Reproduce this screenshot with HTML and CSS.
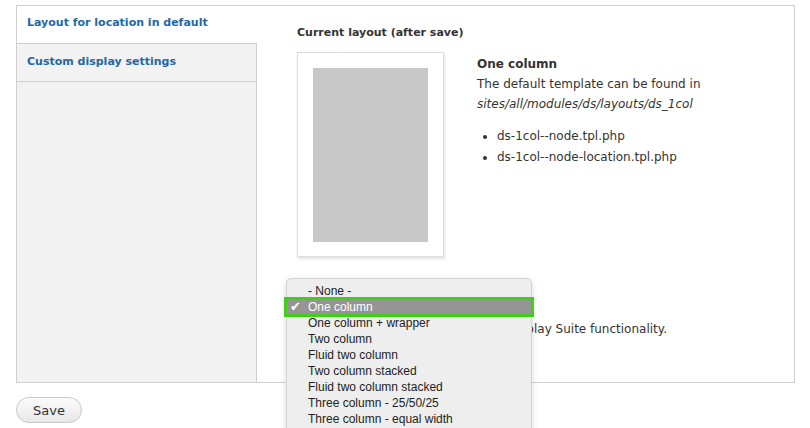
FILE: index.html
```html
<!DOCTYPE html>
<html>
<head>
<meta charset="utf-8">
<link rel="stylesheet" href="styles.css">
</head>
<body>
<div class="page">
  <div class="vtabs">
    <ul class="tablist">
      <li class="tab active"><a href="#">Layout for location in default</a></li>
      <li class="tab"><a href="#">Custom display settings</a></li>
    </ul>
    <div class="pane">
      <h3 class="title">Current layout (after save)</h3>
      <div class="layout-row">
        <div class="preview"><div class="preview-col"></div></div>
        <div class="info">
          <strong class="name">One column</strong>
          <div>The default template can be found in</div>
          <em>sites/all/modules/ds/layouts/ds_1col</em>
          <ul class="files">
            <li>ds-1col--node.tpl.php</li>
            <li>ds-1col--node-location.tpl.php</li>
          </ul>
        </div>
      </div>
      <div class="select-box">One column</div>
      <p class="desc">Select a layout. None will disable Display Suite functionality.</p>
    </div>
  </div>
  <button class="save">Save</button>
  <div class="menu">
    <div class="item">- None -</div>
    <div class="item selected"><span class="check">✔</span>One column</div>
    <div class="item">One column + wrapper</div>
    <div class="item">Two column</div>
    <div class="item">Fluid two column</div>
    <div class="item">Two column stacked</div>
    <div class="item">Fluid two column stacked</div>
    <div class="item">Three column - 25/50/25</div>
    <div class="item">Three column - equal width</div>
    <div class="item">Four column - equal width</div>
  </div>
</div>
</body>
</html>
```

FILE: styles.css
```css
html, body {
  margin: 0;
  padding: 0;
  background: #fff;
  overflow: hidden;
}
body {
  font-family: "DejaVu Sans", "Liberation Sans", sans-serif;
  font-size: 12px;
  color: #333;
}
.page {
  position: relative;
  padding: 5px 15px 0 16px;
  height: 423px;
}
.vtabs {
  display: flex;
  width: 777px;
  height: 376px;
  border: 1px solid #cfcfcf;
}
.tablist {
  list-style: none;
  margin: 0;
  padding: 0;
  width: 239px;
  flex: none;
  background: #f2f2f2;
  border-right: 1px solid #cfcfcf;
}
.tab {
  height: 35px;
  border-bottom: 1px solid #cfcfcf;
  display: flex;
  align-items: center;
  padding: 0 0 2px 10px;
}
.tab.active {
  background: #fff;
  margin-right: -1px;
  padding-bottom: 4px;
  height: 33px;
}
.tab a {
  color: #2367a7;
  font-weight: bold;
  text-decoration: none;
  font-size: 11px;
}
.pane {
  flex: 1;
  padding: 20px 0 0 40px;
}
.title {
  margin: 0;
  font-size: 11px;
  font-weight: bold;
  line-height: 13px;
}
.layout-row {
  display: flex;
  margin-top: 13px;
}
.preview {
  border: 1px solid #ddd;
  box-shadow: 1px 2px 3px rgba(0,0,0,0.12);
  padding: 15px 15px 14px 15px;
  box-sizing: border-box;
  width: 147px;
  height: 205px;
  flex: none;
}
.preview-col {
  width: 115px;
  height: 174px;
  background: #c8c8c8;
}
.info {
  margin-left: 33px;
  display: flex;
  flex-direction: column;
  line-height: 20px;
  padding-top: 2px;
}
.name { font-weight: bold; }
.files {
  margin: 12px 0 0 0;
  padding-left: 20px;
  line-height: 21px;
}
.select-box {
  margin-top: 30px;
  width: 230px;
  height: 20px;
}
.desc {
  margin: 14px 0 0 0;
  line-height: 16px;
  text-indent: 8px;
}
.save {
  margin-top: 14px;
  width: 66px;
  height: 26px;
  border: 1px solid #c8c8c8;
  border-radius: 13px;
  background: linear-gradient(#fbfbfb, #e8e8e8);
  font-family: "DejaVu Sans", sans-serif;
  font-size: 13px;
  color: #333;
  padding: 0;
}
.menu {
  position: absolute;
  left: 286px;
  top: 278px;
  width: 246px;
  height: 170px;
  background: #eeeeee;
  border: 1px solid #d4d4d4;
  border-radius: 5px 5px 0 0;
  box-shadow: 0 2px 6px rgba(0,0,0,0.15);
  padding-top: 4px;
  box-sizing: border-box;
  font-family: "Liberation Sans", sans-serif;
  font-size: 12px;
  color: #222;
}
.item {
  height: 16px;
  line-height: 16px;
  padding-left: 21px;
  position: relative;
}
.item.selected {
  margin: 0 -1px;
  padding-left: 22px;
  background: #959595;
  outline: 3px solid #3fcf17;
  outline-offset: -1px;
  color: #fff;
}
.check {
  position: absolute;
  left: 4px;
  top: 0;
  font-family: "DejaVu Sans", sans-serif;
  font-size: 13px;
}
```
